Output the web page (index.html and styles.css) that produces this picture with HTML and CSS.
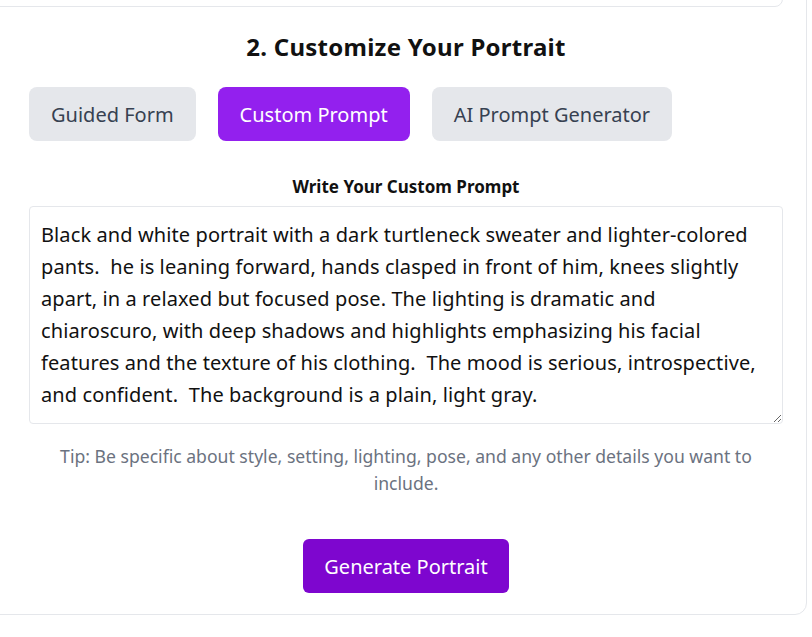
FILE: index.html
```html
<!DOCTYPE html>
<html lang="en">
<head>
<meta charset="utf-8">
<title>Customize Your Portrait</title>
<link rel="stylesheet" href="styles.css">
</head>
<body>
<div class="card">
  <div class="prev-section"></div>
  <section class="customize">
    <h2 class="title">2. Customize Your Portrait</h2>
    <div class="tabs">
      <button class="tab">Guided Form</button>
      <button class="tab active">Custom Prompt</button>
      <button class="tab">AI Prompt Generator</button>
    </div>
    <label class="label" for="prompt">Write Your Custom Prompt</label>
    <textarea id="prompt" class="prompt" rows="6">Black and white portrait with a dark turtleneck sweater and lighter-colored pants.  he is leaning forward, hands clasped in front of him, knees slightly apart, in a relaxed but focused pose. The lighting is dramatic and chiaroscuro, with deep shadows and highlights emphasizing his facial features and the texture of his clothing.  The mood is serious, introspective, and confident.  The background is a plain, light gray.</textarea>
    <p class="tip">Tip: Be specific about style, setting, lighting, pose, and any other details you want to include.</p>
    <div class="actions">
      <button class="generate">Generate Portrait</button>
    </div>
  </section>
</div>
</body>
</html>
```
FILE: styles.css
```css
html, body {
  margin: 0;
  padding: 0;
  background: #ffffff;
  overflow: hidden;
}
body {
  font-family: "Noto Sans", "Open Sans", sans-serif;
  color: #111111;
}
.card {
  margin: -40px 5px 0 -40px;
  border: 1px solid #e5e7eb;
  border-radius: 12px;
  padding: 0 23px 21px 68px;
  background: #fff;
}
.prev-section {
  height: 44px;
  margin-left: -80px;
  border: 1px solid #e5e7eb;
  border-radius: 8px;
}
.customize {
  display: flex;
  flex-direction: column;
}
.title {
  margin: 24px 0 0;
  text-align: center;
  font-size: 24px;
  font-weight: 700;
  letter-spacing: 0.25px;
  line-height: 32px;
  color: #111;
}
.tabs {
  display: flex;
  gap: 22px;
  margin-top: 24px;
}
.tab {
  font-family: inherit;
  font-size: 20px;
  height: 54px;
  padding: 0 22px;
  border: none;
  border-radius: 8px;
  background: #e5e7eb;
  color: #374151;
  cursor: pointer;
}
.tab.active {
  background: #9320ee;
  color: #ffffff;
}
.label {
  margin-top: 35px;
  text-align: center;
  font-size: 17px;
  font-weight: 700;
  line-height: 22px;
  color: #111;
}
.prompt {
  margin-top: 8px;
  display: block;
  box-sizing: border-box;
  width: 100%;
  height: 218px;
  padding: 12px 11px;
  border: 1px solid #e5e7eb;
  border-radius: 4px;
  font-family: inherit;
  font-size: 20px;
  letter-spacing: 0.1px;
  line-height: 32px;
  color: #111;
  resize: vertical;
}
.tip {
  margin: 19px 0 0;
  text-align: center;
  font-size: 17.6px;
  line-height: 27px;
  color: #6b7280;
}
.actions {
  display: flex;
  justify-content: center;
  margin-top: 42px;
}
.generate {
  font-family: inherit;
  font-size: 20px;
  height: 54px;
  padding: 0 21px;
  border: none;
  border-radius: 6px;
  background: #7e06cf;
  color: #ffffff;
  cursor: pointer;
}
```
